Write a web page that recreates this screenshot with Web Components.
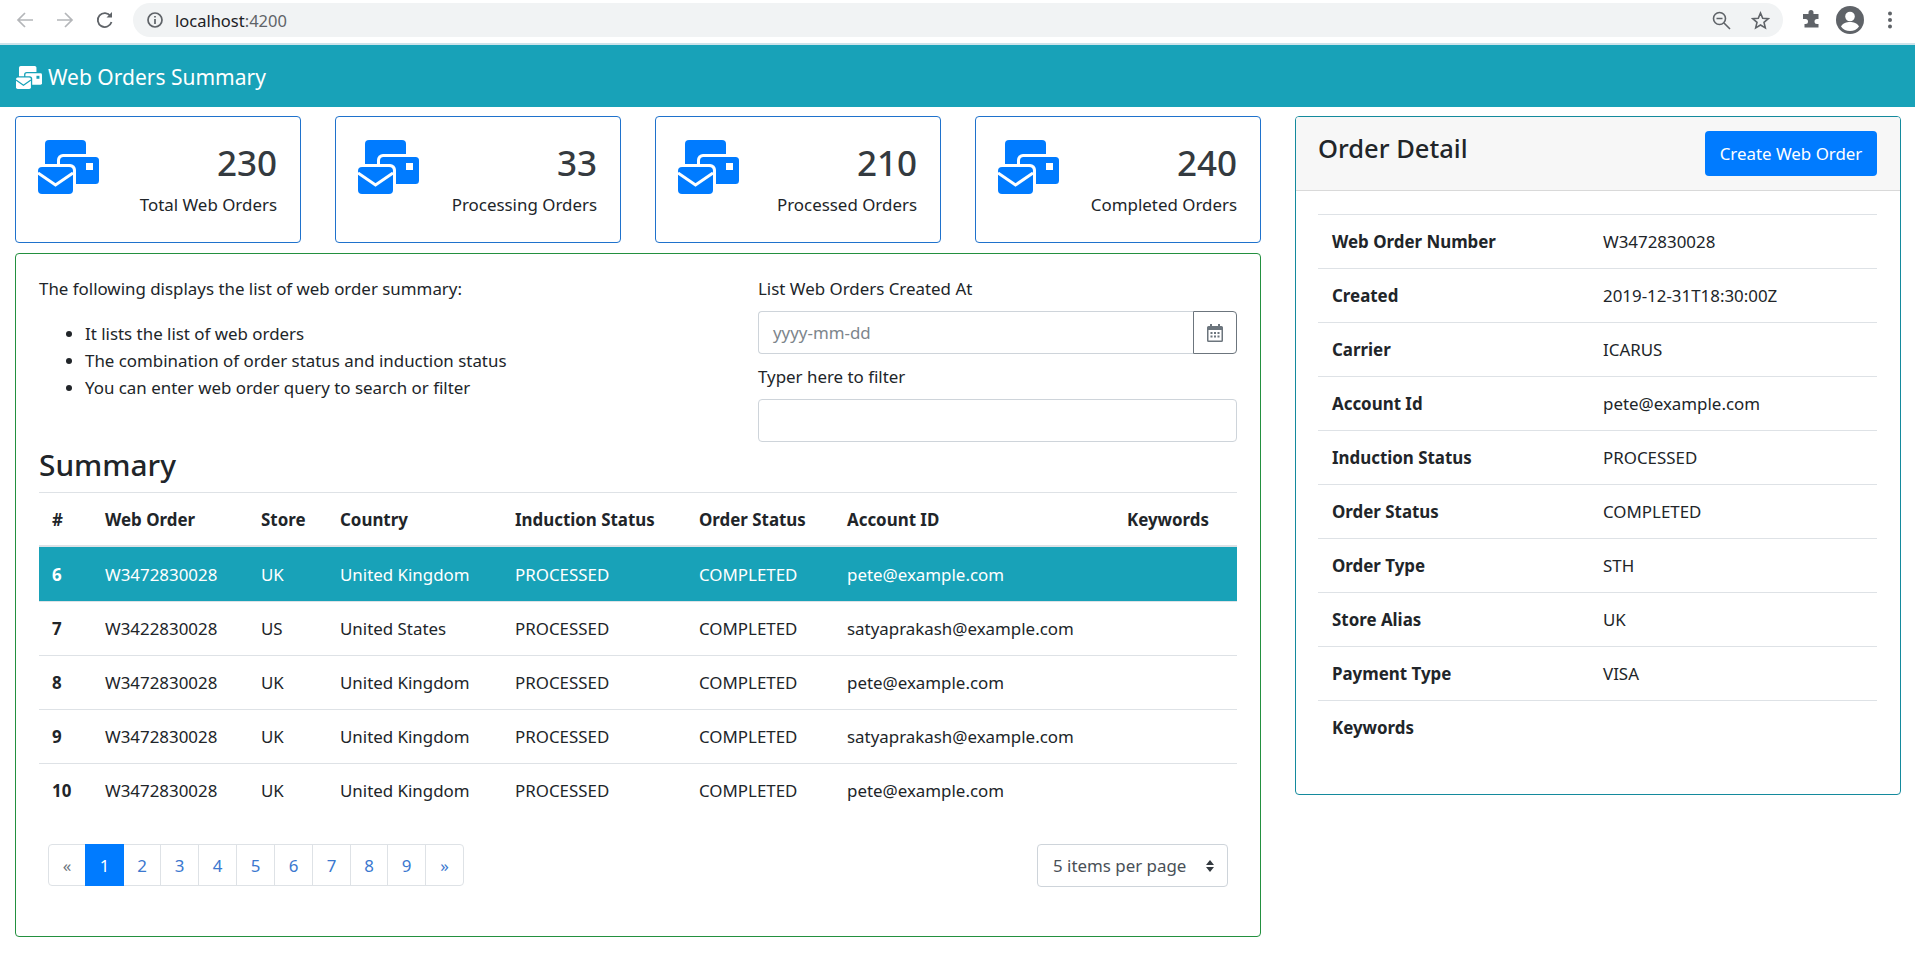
<!DOCTYPE html>
<html>
<head>
<meta charset="utf-8">
<title>Web Orders Summary</title>
<style>
  html, body { margin: 0; padding: 0; background: #fff; }
  body {
    font-family: "Noto Sans", "Open Sans", sans-serif;
    font-size: 16.9px;
    color: #212529;
    width: 1915px;
    height: 956px;
    overflow: hidden;
  }
</style>
</head>
<body>
<browser-bar url="localhost" port=":4200"></browser-bar>
<app-navbar>Web Orders Summary</app-navbar>
<page-layout>
  <stat-row slot="stats">
    <stat-card value="230" label="Total Web Orders"></stat-card>
    <stat-card value="33" label="Processing Orders"></stat-card>
    <stat-card value="210" label="Processed Orders"></stat-card>
    <stat-card value="240" label="Completed Orders"></stat-card>
  </stat-row>
  <order-summary slot="summary"></order-summary>
  <order-detail slot="detail"></order-detail>
</page-layout>

<script>
// fg is the icon colour, gap the colour of the cut lines between its three shapes
function orderIcon(fg, gap) {
  return `
    <rect x="7" y="0" width="41" height="30" rx="4" fill="${fg}"/>
    <rect x="19" y="14" width="45" height="33" rx="6" fill="${gap}"/>
    <rect x="22" y="17" width="39" height="27" rx="3.500" fill="${fg}"/>
    <rect x="48" y="23" width="7" height="7" fill="${gap}"/>
    <rect x="-3" y="24" width="41" height="33" rx="6" fill="${gap}"/>
    <rect x="0" y="27" width="35" height="27" rx="4" fill="${fg}"/>
    <path d="M0 33l17.500 12L35 33" fill="none" stroke="${gap}" stroke-width="3"/>
  `;
}

class BrowserBar extends HTMLElement {
  constructor() {
    super();
    this.attachShadow({ mode: 'open' });
  }

  connectedCallback() {
    this.shadowRoot.innerHTML = `
      <style>
        :host {
          display: flex;
          align-items: center;
          height: 40px;
          border-bottom: 2px solid #cde3ea;
          background: #fff;
          padding-bottom: 3px;
        }
        svg { display: block; flex: none; }
        .nav { display: flex; gap: 22px; margin-left: 16px; width: 117px; align-items: center; }
        .pill {
          flex: none;
          display: flex;
          align-items: center;
          width: 1650px;
          height: 34px;
          background: #f1f3f4;
          border-radius: 17px;
          font-size: 16.500px;
        }
        .pill .info { margin-left: 13px; }
        .host { margin-left: 11px; color: #202124; }
        .port { color: #5f6368; }
        .spacer { flex: 1; }
        .pill .zoom { margin-right: 20px; }
        .pill .star { margin-right: 13px; }
        .tools { display: flex; align-items: center; margin-left: 18px; }
      </style>
      <div class="nav">
        <svg width="18" height="18" viewBox="0 0 18 18" fill="none" stroke="#b4b6b9" stroke-width="1.700"><path d="M17 9H2M9 2L2 9l7 7"/></svg>
        <svg width="18" height="18" viewBox="0 0 18 18" fill="none" stroke="#b4b6b9" stroke-width="1.700"><path d="M1 9h15M9 2l7 7-7 7"/></svg>
        <svg width="18" height="18" viewBox="0 0 18 18" fill="none" stroke="#5f6368" stroke-width="1.800"><path d="M15.500 11a7 7 0 1 1-1-6"/><path d="M16 1v5.500h-5.500" fill="#5f6368" stroke="none"/></svg>
      </div>
      <div class="pill">
        <svg class="info" width="18" height="18" viewBox="0 0 18 18" fill="none" stroke="#5f6368" stroke-width="1.700"><circle cx="9" cy="9" r="7"/><path d="M9 8v5M9 5v1.600"/></svg>
        <span class="host">${this.getAttribute('url')}</span><span class="port">${this.getAttribute('port')}</span>
        <span class="spacer"></span>
        <svg class="zoom" width="19" height="19" viewBox="0 0 19 19" fill="none" stroke="#5f6368" stroke-width="1.600"><circle cx="7.500" cy="7.500" r="6"/><path d="M12 12l6 6M4.500 7.500h6"/></svg>
        <svg class="star" width="19" height="19" viewBox="0 0 19 19" fill="none" stroke="#5f6368" stroke-width="1.600"><path d="M9.500 2l2.200 5.200 5.600.5-4.300 3.700 1.300 5.500-4.800-2.900-4.800 2.900 1.300-5.500-4.300-3.700 5.600-.5z"/></svg>
      </div>
      <div class="tools">
        <svg width="20" height="20" viewBox="0 0 20 20" fill="#5f6368"><path d="M7 3.500a2.500 2.500 0 0 1 5 0V5h5v5h-1.500a2.500 2.500 0 0 0 0 5H17v3.500H3V15h1a2.500 2.500 0 0 0 0-5H1.500V5H7z" transform="translate(.5 -1)"/></svg>
        <svg style="margin-left:15px" width="28" height="28" viewBox="0 0 28 28"><circle cx="14" cy="14" r="14" fill="#5f6368"/><circle cx="14" cy="10.500" r="4.800" fill="#fff"/><path d="M5 20.500c2-3.500 5.500-4.500 9-4.500s7 1 9 4.500c-2 3-5.500 4.500-9 4.500s-7-1.500-9-4.500z" fill="#fff"/></svg>
        <svg style="margin-left:23px" width="6" height="18" viewBox="0 0 6 18" fill="#5f6368"><circle cx="3" cy="2.500" r="2"/><circle cx="3" cy="9" r="2"/><circle cx="3" cy="15.500" r="2"/></svg>
      </div>
    `;
  }
}

class AppNavbar extends HTMLElement {
  constructor() {
    super();
    this.attachShadow({ mode: 'open' });
  }

  connectedCallback() {
    this.shadowRoot.innerHTML = `
      <style>
        :host {
          display: flex;
          align-items: center;
          height: 60px;
          padding: 2px 0 0 16px;
          background: #18a2b8;
          color: #fff;
          font-size: 21px;
        }
        svg { display: block; margin-right: 6px; overflow: hidden; }
      </style>
      <svg width="26" height="23" viewBox="0 0 61 54">${orderIcon('#fff', '#18a2b8')}</svg>
      <slot></slot>
    `;
  }
}

class PageLayout extends HTMLElement {
  constructor() {
    super();
    this.attachShadow({ mode: 'open' });
  }

  connectedCallback() {
    this.shadowRoot.innerHTML = `
      <style>
        :host {
          display: grid;
          grid-template-columns: 1246px 606px;
          column-gap: 34px;
          padding: 9px 0 0 15px;
          align-items: start;
        }
        .left { display: flex; flex-direction: column; gap: 10px; }
      </style>
      <div class="left">
        <slot name="stats"></slot>
        <slot name="summary"></slot>
      </div>
      <slot name="detail"></slot>
    `;
  }
}

class StatRow extends HTMLElement {
  constructor() {
    super();
    this.attachShadow({ mode: 'open' });
  }

  connectedCallback() {
    this.shadowRoot.innerHTML = `
      <style>
        :host { display: grid; grid-template-columns: repeat(4, 286px); column-gap: 34px; }
      </style>
      <slot></slot>
    `;
  }
}

class StatCard extends HTMLElement {
  constructor() {
    super();
    this.attachShadow({ mode: 'open' });
  }

  connectedCallback() {
    this.shadowRoot.innerHTML = `
      <style>
        :host {
          display: flex;
          justify-content: space-between;
          box-sizing: border-box;
          height: 127px;
          border: 1px solid #1f72cc;
          border-radius: 4px;
          padding: 23px 23px 0 22px;
        }
        svg { display: block; flex: none; overflow: hidden; }
        .text { text-align: right; }
        .value { font-size: 35px; font-weight: 500; color: #343a40; line-height: 46px; }
        .label { margin-top: 7px; line-height: 24px; }
      </style>
      <svg width="61" height="54" viewBox="0 0 61 54">${orderIcon('#007bff', '#fff')}</svg>
      <div class="text">
        <div class="value">${this.getAttribute('value')}</div>
        <div class="label">${this.getAttribute('label')}</div>
      </div>
    `;
  }
}

class FilterForm extends HTMLElement {
  constructor() {
    super();
    this.attachShadow({ mode: 'open' });
  }

  connectedCallback() {
    this.shadowRoot.innerHTML = `
      <style>
        :host { display: block; width: 479px; }
        .label { line-height: 24px; height: 24px; }
        .group { display: flex; height: 43px; margin: 10px 0 11px; }
        .box {
          box-sizing: border-box;
          flex: 1;
          height: 43px;
          border: 1px solid #ced4da;
          border-radius: 4px;
          padding: 0 14px;
          line-height: 41px;
          color: #7d858c;
        }
        .group .box { border-radius: 4px 0 0 4px; border-right: 0; }
        .cal {
          box-sizing: border-box;
          flex: none;
          width: 44px;
          height: 43px;
          border: 1px solid #6c757d;
          border-radius: 0 4px 4px 0;
          display: flex;
          align-items: center;
          justify-content: center;
        }
      </style>
      <div class="label">List Web Orders Created At</div>
      <div class="group">
        <div class="box">yyyy-mm-dd</div>
        <div class="cal">
          <svg width="16" height="18" viewBox="0 0 16 18" fill="#6c757d"><path fill-rule="evenodd" d="M3 0h2v2h6V0h2v2h1.500A1.500 1.500 0 0 1 16 3.500v13a1.500 1.500 0 0 1-1.500 1.500h-13A1.500 1.500 0 0 1 0 16.500v-13A1.500 1.500 0 0 1 1.500 2H3zM1.500 6v10.500h13V6zM3.500 8h2v2h-2zM7 8h2v2H7zM10.500 8h2v2h-2zM3.500 11.500h2v2h-2zM7 11.500h2v2H7zM10.500 11.500h2v2h-2z"/></svg>
        </div>
      </div>
      <div class="label">Typer here to filter</div>
      <div class="group" style="margin-bottom:0"><div class="box" style="border:1px solid #ced4da;border-radius:4px"></div></div>
    `;
  }
}

class OrdersTable extends HTMLElement {
  constructor() {
    super();
    this.attachShadow({ mode: 'open' });
  }

  connectedCallback() {
    const uk = 'United Kingdom';
    const pete = 'pete@example.com';
    const satya = 'satyaprakash@example.com';
    const rows = [
      [6, 'W3472830028', 'UK', uk, pete],
      [7, 'W3422830028', 'US', 'United States', satya],
      [8, 'W3472830028', 'UK', uk, pete],
      [9, 'W3472830028', 'UK', uk, satya],
      [10, 'W3472830028', 'UK', uk, pete],
    ];
    const body = rows.map((r, i) => `
      <tr class="${i === 0 ? 'active' : ''}">
        <th>${r[0]}</th><td>${r[1]}</td><td>${r[2]}</td><td>${r[3]}</td>
        <td>PROCESSED</td><td>COMPLETED</td><td>${r[4]}</td><td></td>
      </tr>`).join('');
    this.shadowRoot.innerHTML = `
      <style>
        :host { display: block; }
        table { border-collapse: collapse; table-layout: fixed; width: 1198px; }
        th, td { padding: 0 0 0 13px; height: 53px; text-align: left; border-top: 1px solid #dee2e6; font-weight: 400; }
        th { font-weight: 700; }
        thead th { border-bottom: 2px solid #dee2e6; height: 52px; }
        tbody tr:first-child th, tbody tr:first-child td { border-top: 0; height: 54px; }
        .active th, .active td { background: #18a2b8; color: #fff; }
      </style>
      <table>
        <colgroup>
          <col style="width:53px"><col style="width:156px"><col style="width:79px"><col style="width:175px">
          <col style="width:184px"><col style="width:148px"><col style="width:280px"><col style="width:123px">
        </colgroup>
        <thead>
          <tr><th>#</th><th>Web Order</th><th>Store</th><th>Country</th><th>Induction Status</th><th>Order Status</th><th>Account ID</th><th>Keywords</th></tr>
        </thead>
        <tbody>${body}</tbody>
      </table>
    `;
  }
}

class PageNav extends HTMLElement {
  constructor() {
    super();
    this.attachShadow({ mode: 'open' });
  }

  connectedCallback() {
    const pages = ['1', '2', '3', '4', '5', '6', '7', '8', '9'];
    this.shadowRoot.innerHTML = `
      <style>
        :host { display: flex; justify-content: space-between; padding: 0 9px; height: 43px; }
        ul { display: flex; list-style: none; margin: 0; padding: 0; }
        li {
          box-sizing: border-box;
          width: 39px;
          height: 42px;
          margin-left: -1px;
          border: 1px solid #dee2e6;
          display: flex;
          align-items: center;
          justify-content: center;
          color: #3b78cf;
        }
        li:first-child { margin-left: 0; border-radius: 4px 0 0 4px; color: #6c757d; width: 38px; }
        li:last-child { border-radius: 0 4px 4px 0; }
        li.on { background: #007bff; border-color: #007bff; color: #fff; position: relative; }
        li.on + li, li:nth-child(9) { width: 38px; }
        .select {
          box-sizing: border-box;
          width: 191px;
          height: 43px;
          border: 1px solid #ced4da;
          border-radius: 4px;
          display: flex;
          align-items: center;
          justify-content: space-between;
          padding: 0 13px 0 15px;
          color: #495057;
        }
      </style>
      <ul>
        <li>«</li>
        ${pages.map((p, i) => `<li class="${i === 0 ? 'on' : ''}">${p}</li>`).join('')}
        <li>»</li>
      </ul>
      <div class="select">
        <span>5 items per page</span>
        <svg width="8" height="12" viewBox="0 0 8 12" fill="#343a40"><path d="M4 0l4 5H0zM4 12L0 7h8z"/></svg>
      </div>
    `;
  }
}

class OrderSummary extends HTMLElement {
  constructor() {
    super();
    this.attachShadow({ mode: 'open' });
  }

  connectedCallback() {
    this.shadowRoot.innerHTML = `
      <style>
        :host {
          display: block;
          box-sizing: border-box;
          height: 684px;
          border: 1px solid #23903f;
          border-radius: 4px;
          padding: 23px 23px 0;
        }
        .top { display: flex; justify-content: space-between; height: 166px; }
        p { margin: 0; line-height: 24px; }
        ul { margin: 19px 0 0; padding: 0 0 0 46px; line-height: 27px; }
        h3 { margin: 0; height: 49px; line-height: 44px; font-size: 29.800px; font-weight: 500; }
        page-nav { margin-top: 27px; }
      </style>
      <div class="top">
        <div>
          <p>The following displays the list of web order summary:</p>
          <ul>
            <li>It lists the list of web orders</li>
            <li>The combination of order status and induction status</li>
            <li>You can enter web order query to search or filter</li>
          </ul>
        </div>
        <filter-form></filter-form>
      </div>
      <h3>Summary</h3>
      <orders-table></orders-table>
      <page-nav></page-nav>
    `;
  }
}

class OrderDetail extends HTMLElement {
  constructor() {
    super();
    this.attachShadow({ mode: 'open' });
  }

  connectedCallback() {
    const rows = [
      ['Web Order Number', 'W3472830028'],
      ['Created', '2019-12-31T18:30:00Z'],
      ['Carrier', 'ICARUS'],
      ['Account Id', 'pete@example.com'],
      ['Induction Status', 'PROCESSED'],
      ['Order Status', 'COMPLETED'],
      ['Order Type', 'STH'],
      ['Store Alias', 'UK'],
      ['Payment Type', 'VISA'],
      ['Keywords', ''],
    ];
    this.shadowRoot.innerHTML = `
      <style>
        :host {
          display: block;
          box-sizing: border-box;
          height: 679px;
          border: 1px solid #148a9d;
          border-radius: 4px;
          overflow: hidden;
        }
        header {
          display: flex;
          justify-content: space-between;
          box-sizing: border-box;
          height: 74px;
          padding: 14px 23px 0 22px;
          background: #f7f7f7;
          border-bottom: 1px solid #d9d9d9;
        }
        h4 { margin: 0; font-size: 25.500px; font-weight: 500; line-height: 34px; }
        button {
          box-sizing: border-box;
          width: 172px;
          height: 45px;
          border: 0;
          border-radius: 4px;
          background: #007bff;
          color: #fff;
          font: inherit;
          padding: 0;
        }
        .body { padding: 23px 23px 0 22px; }
        .row { display: flex; align-items: center; height: 52px; padding: 0 0 1px 14px; border-top: 1px solid #dee2e6; }
        .key { width: 271px; font-weight: 700; flex: none; }
      </style>
      <header>
        <h4>Order Detail</h4>
        <button>Create Web Order</button>
      </header>
      <div class="body">
        ${rows.map(r => `<div class="row"><div class="key">${r[0]}</div><div>${r[1]}</div></div>`).join('')}
      </div>
    `;
  }
}

customElements.define('browser-bar', BrowserBar);
customElements.define('app-navbar', AppNavbar);
customElements.define('page-layout', PageLayout);
customElements.define('stat-row', StatRow);
customElements.define('stat-card', StatCard);
customElements.define('filter-form', FilterForm);
customElements.define('orders-table', OrdersTable);
customElements.define('page-nav', PageNav);
customElements.define('order-summary', OrderSummary);
customElements.define('order-detail', OrderDetail);
</script>
</body>
</html>
